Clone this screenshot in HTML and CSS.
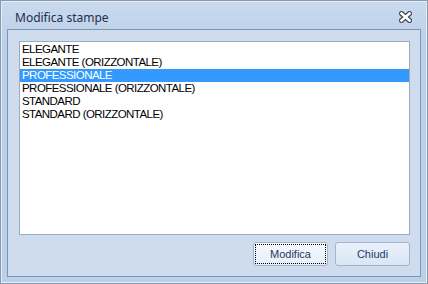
FILE: index.html
```html
<!DOCTYPE html>
<html>
<head>
<meta charset="utf-8">
<link rel="stylesheet" href="styles.css">
</head>
<body>
<div class="window">
  <div class="titlebar">
    <span class="title">Modifica stampe</span>
    <svg class="close" width="13" height="12" viewBox="0 0 13 12">
      <path d="M2.5 2.5 L10.5 9.5 M10.5 2.5 L2.5 9.5" stroke="#3f4a5c" stroke-width="5" stroke-linecap="square"/>
      <path d="M2.5 2.5 L10.5 9.5 M10.5 2.5 L2.5 9.5" stroke="#ffffff" stroke-width="2.6" stroke-linecap="square"/>
    </svg>
  </div>
  <div class="panel">
    <div class="list">
      <div class="row">ELEGANTE</div>
      <div class="row">ELEGANTE (ORIZZONTALE)</div>
      <div class="row selected">PROFESSIONALE</div>
      <div class="row">PROFESSIONALE (ORIZZONTALE)</div>
      <div class="row">STANDARD</div>
      <div class="row">STANDARD (ORIZZONTALE)</div>
    </div>
    <div class="buttons">
      <button class="btn focused"><span class="focus">Modifica</span></button>
      <button class="btn"><span class="focus">Chiudi</span></button>
    </div>
  </div>
</div>
</body>
</html>
```
FILE: styles.css
```css
html, body {
  margin: 0;
  padding: 0;
  background: #bfd2e9;
}
.window {
  box-sizing: border-box;
  width: 428px;
  height: 284px;
  border: 1px solid #8a99ac;
  box-shadow: inset 1px 1px 0 #e4edf8, inset -1px -1px 0 #e4edf8;
  background: linear-gradient(#c9daee, #bcd0e8 40px, #bcd0e8);
  display: flex;
  flex-direction: column;
}
.titlebar {
  height: 28px;
  display: flex;
  align-items: center;
  justify-content: space-between;
  padding: 0 15px 0 14px;
}
.title {
  font-family: "Noto Sans", "DejaVu Sans", sans-serif;
  font-size: 12px;
  color: #1f2f4a;
  position: relative;
  top: 2px;
}
.close {
  display: block;
  position: relative;
  top: 2px;
}
.panel {
  flex: 1;
  margin: 0 6px 6px 6px;
  border: 1px solid #7b96b4;
  background: #cfdcee;
  display: flex;
  flex-direction: column;
  padding: 11px 10px 10px 11px;
}
.list {
  height: 191px;
  background: #ffffff;
  border: 1px solid #9aabc4;
  padding-top: 1px;
}
.row {
  height: 13px;
  line-height: 13px;
  padding-left: 2px;
  font-family: "Liberation Sans", Arial, sans-serif;
  font-size: 11.5px;
  letter-spacing: -0.55px;
  color: #000000;
  white-space: nowrap;
}
.row.selected {
  background: #3399ff;
  color: #ffffff;
}
.buttons {
  display: flex;
  justify-content: flex-end;
  gap: 7px;
  margin-top: 7px;
}
.btn {
  box-sizing: border-box;
  width: 75px;
  height: 24px;
  border: 1px solid #a3b5cc;
  border-radius: 3px;
  background: linear-gradient(#e9f1fb, #dae6f5);
  padding: 1px;
  font-family: "Liberation Sans", Arial, sans-serif;
  font-size: 11px;
  color: #1e3a5f;
  display: flex;
}
.btn .focus {
  flex: 1;
  display: flex;
  align-items: center;
  justify-content: center;
  border: 1px dotted transparent;
}
.btn.focused {
  background: linear-gradient(#f7fafe, #e6eef9);
}
.btn.focused .focus {
  border-color: #000000;
}
```
